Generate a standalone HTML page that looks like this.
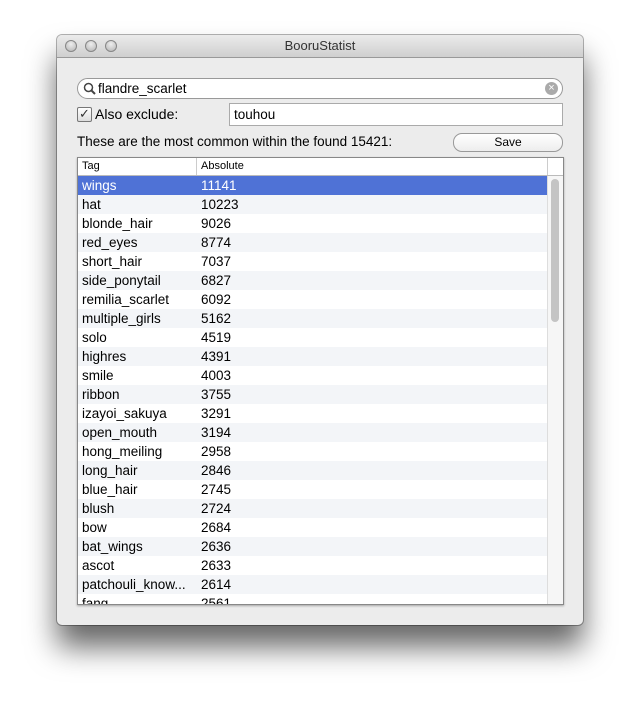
<!DOCTYPE html><html><head><style>
body{margin:0;width:640px;height:704px;background:#fff;font-family:"Liberation Sans",sans-serif;position:relative;overflow:hidden}
.win{position:absolute;left:57px;top:35px;width:526px;height:590px;background:#ececec;border-radius:5px;box-shadow:0 22px 30px rgba(0,0,0,.6),0 0 0 1px rgba(0,0,0,.3);overflow:hidden}
.tb{height:22px;background:linear-gradient(#ebebeb,#cfcfcf);border-bottom:1px solid #999;text-align:center;font-size:13px;line-height:22px;color:#333}
.btn{position:absolute;top:5px;width:12px;height:12px;border-radius:50%;background:radial-gradient(circle at 50% 35%,#eee,#aaa);box-shadow:inset 0 0 0 1px #888}
.a{position:absolute}
.search{left:20px;top:43px;width:484px;height:19px;background:#fff;border:1px solid #999;border-radius:11px;font-size:13px;line-height:19px}
.field{left:172px;top:68px;width:332px;height:21px;background:#fff;border:1px solid #aaa;font-size:13.5px;line-height:21px}
.save{left:396px;top:98px;width:108px;height:17px;border:1px solid #999;border-radius:9px;background:linear-gradient(#fff,#ededed);font-size:12px;text-align:center;line-height:17px}
.tbl{left:20px;top:122px;width:485px;height:446px;border:1px solid #888;background:#fff;overflow:hidden;box-shadow:0 1px 2px rgba(0,0,0,.3)}
.hd{height:17px;border-bottom:1px solid #bbb;font-size:11px;line-height:17px;position:relative;background:#fff}
.r{height:19px;font-size:13.5px;line-height:19px;position:relative;width:469px}
.r:nth-child(even){background:#f3f5f8}
.r span{position:absolute;left:123px}
.r b{font-weight:normal;position:absolute;left:4px}
.sel{background:#4f72d6!important;color:#fff}
</style></head><body>
<div class="win">
<div class="tb">BooruStatist</div>
<div class="btn" style="left:8px"></div><div class="btn" style="left:28px"></div><div class="btn" style="left:48px"></div>
<div class="a search"><svg width="14" height="14" style="position:absolute;left:5px;top:3px"><circle cx="5.5" cy="5.5" r="4" fill="none" stroke="#444" stroke-width="1.5"/><line x1="8.5" y1="8.5" x2="12" y2="12" stroke="#444" stroke-width="2"/></svg><span style="position:absolute;left:20px;font-size:13.5px">flandre_scarlet</span><div style="position:absolute;right:4px;top:3px;width:13px;height:13px;border-radius:50%;background:#aaa;color:#fff;font-size:11px;line-height:13px;text-align:center">×</div></div>
<div class="a" style="left:20px;top:72px;width:13px;height:13px;border:1px solid #777;border-radius:2px;background:linear-gradient(#fff,#ddd);font-size:13px;line-height:12px;text-align:center;color:#333">✓</div>
<div class="a" style="left:38px;top:71px;font-size:14px">Also exclude:</div>
<div class="a field"><span style="margin-left:4px">touhou</span></div>
<div class="a" style="left:20px;top:99px;font-size:13.5px">These are the most common within the found 15421:</div>
<div class="a save">Save</div>
<div class="a tbl">
<div class="hd"><span style="position:absolute;left:4px">Tag</span><span style="position:absolute;left:118px;border-left:1px solid #ccc;padding-left:4px;height:17px">Absolute</span><span style="position:absolute;left:469px;border-left:1px solid #ccc;height:17px"></span></div>
<div>
<div class="r sel"><b>wings</b><span>11141</span></div>
<div class="r"><b>hat</b><span>10223</span></div>
<div class="r"><b>blonde_hair</b><span>9026</span></div>
<div class="r"><b>red_eyes</b><span>8774</span></div>
<div class="r"><b>short_hair</b><span>7037</span></div>
<div class="r"><b>side_ponytail</b><span>6827</span></div>
<div class="r"><b>remilia_scarlet</b><span>6092</span></div>
<div class="r"><b>multiple_girls</b><span>5162</span></div>
<div class="r"><b>solo</b><span>4519</span></div>
<div class="r"><b>highres</b><span>4391</span></div>
<div class="r"><b>smile</b><span>4003</span></div>
<div class="r"><b>ribbon</b><span>3755</span></div>
<div class="r"><b>izayoi_sakuya</b><span>3291</span></div>
<div class="r"><b>open_mouth</b><span>3194</span></div>
<div class="r"><b>hong_meiling</b><span>2958</span></div>
<div class="r"><b>long_hair</b><span>2846</span></div>
<div class="r"><b>blue_hair</b><span>2745</span></div>
<div class="r"><b>blush</b><span>2724</span></div>
<div class="r"><b>bow</b><span>2684</span></div>
<div class="r"><b>bat_wings</b><span>2636</span></div>
<div class="r"><b>ascot</b><span>2633</span></div>
<div class="r"><b>patchouli_know...</b><span>2614</span></div>
<div class="r"><b>fang</b><span>2561</span></div>
</div>
<div style="position:absolute;left:469px;top:18px;width:16px;height:430px;background:#f6f6f6;border-left:1px solid #ddd"></div>
<div style="position:absolute;left:473px;top:21px;width:8px;height:143px;border-radius:4px;background:#c4c4c4"></div>
</div>
</div>
</body></html>
